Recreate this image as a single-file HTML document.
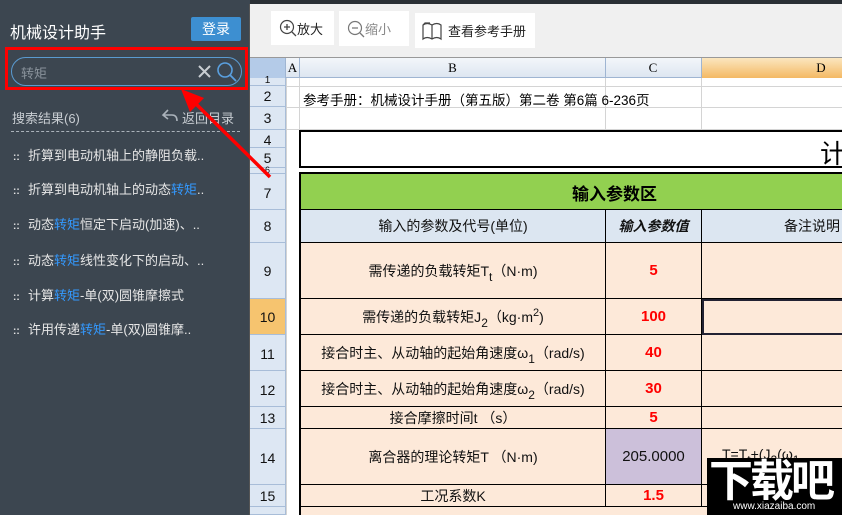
<!DOCTYPE html>
<html><head><meta charset="utf-8"><style>
*{margin:0;padding:0;box-sizing:border-box}
body{width:842px;height:515px;overflow:hidden;position:relative;background:#fff;font-family:"Liberation Sans","Noto Sans CJK SC",sans-serif}
.a{position:absolute}
.sb{left:0;top:0;width:250px;height:515px;background:#3c4650}
.it{left:13px;font-size:13px;color:#e6e6e6;white-space:nowrap}
.it b{font-weight:normal;color:#3399ff}
.dot{display:inline-block;width:7px;margin-right:8px;font-size:10px;font-weight:bold}
.tb{background:#fff;font-size:13px;color:#222;display:flex;align-items:center}
.rh{left:250px;width:36px;background:#dde7f3;border-bottom:1px solid #a8bdd8;border-right:1px solid #a8bdd8;text-align:center;font-size:14px;font-family:"Liberation Sans",sans-serif;color:#111}
.c{position:absolute;display:flex;align-items:center;justify-content:center;font-size:14px;color:#111;border-right:1px solid #000;border-bottom:1px solid #000;white-space:nowrap}
.r{color:#f00;font-weight:bold;font-size:15px}
sub{font-size:12px;vertical-align:-5px;line-height:0}
sup{font-size:11px;vertical-align:6px;line-height:0}
</style></head><body>
<div class="a" style="left:0;top:0;width:842px;height:4px;background:#2a2f35"></div>
<div class="a sb"></div>
<div class="a" style="left:10px;top:19px;font-size:16px;color:#fff">机械设计助手</div>
<div class="a" style="left:191px;top:17px;width:50px;height:24px;background:#3d8fd1;border-radius:2px;color:#fff;font-size:14px;text-align:center;line-height:24px">登录</div>
<div class="a" style="left:5px;top:47px;width:243px;height:43px;border:3px solid #f00"></div>
<div class="a" style="left:11px;top:57px;width:231px;height:29px;border:1px solid #5a9ad0;border-radius:15px"></div>
<div class="a" style="left:21px;top:63px;font-size:13px;color:#8a939c">转矩</div>
<svg class="a" style="left:196px;top:60px" width="46" height="24"><path d="M3 6L14 17M14 6L3 17" stroke="#c8cdd2" stroke-width="2"/><circle cx="29" cy="10" r="7" fill="none" stroke="#5aa0e0" stroke-width="1.6"/><path d="M34 15L40 21" stroke="#5aa0e0" stroke-width="1.8"/></svg>
<div class="a" style="left:12px;top:108px;font-size:13px;color:#c8cdd2">搜索结果(6)</div>
<svg class="a" style="left:160px;top:107px" width="20" height="16"><path d="M8 3L3 8L8 12M3 8H12Q17 8 17 14" fill="none" stroke="#aab2ba" stroke-width="1.6"/></svg>
<div class="a" style="left:182px;top:108px;font-size:13px;color:#c8cdd2">返回目录</div>
<div class="a" style="left:11px;top:131px;width:229px;border-top:1px dashed #aab2ba"></div>
<div class="a it" style="top:145px"><span class="dot">::</span>折算到电动机轴上的静阻负载..</div>
<div class="a it" style="top:179px"><span class="dot">::</span>折算到电动机轴上的动态<b>转矩</b>..</div>
<div class="a it" style="top:214px"><span class="dot">::</span>动态<b>转矩</b>恒定下启动(加速)、..</div>
<div class="a it" style="top:250px"><span class="dot">::</span>动态<b>转矩</b>线性变化下的启动、..</div>
<div class="a it" style="top:285px"><span class="dot">::</span>计算<b>转矩</b>-单(双)圆锥摩擦式</div>
<div class="a it" style="top:319px"><span class="dot">::</span>许用传递<b>转矩</b>-单(双)圆锥摩..</div>
<div class="a" style="left:249px;top:4px;width:593px;height:54px;background:#f0f0f0;border-bottom:1px solid #999"></div>
<div class="a" style="left:249px;top:4px;width:1px;height:511px;background:#555"></div>
<div class="a tb" style="left:271px;top:11px;width:63px;height:34px;padding-left:8px"><svg width="18" height="18"><circle cx="8" cy="8" r="6.5" fill="none" stroke="#444" stroke-width="1.2"/><path d="M5 8H11M8 5V11M13 13L17 17" stroke="#444" stroke-width="1.3"/></svg>放大</div>
<div class="a tb" style="left:339px;top:11px;width:70px;height:35px;padding-left:8px;color:#888"><svg width="18" height="18"><circle cx="8" cy="8" r="6.5" fill="none" stroke="#777" stroke-width="1.2"/><path d="M5 8H11M13 13L17 17" stroke="#777" stroke-width="1.3"/></svg>缩小</div>
<div class="a tb" style="left:415px;top:13px;width:120px;height:35px;padding-left:6px"><svg width="22" height="20" style="margin-right:5px"><path d="M2 4Q6 1 11 4Q16 1 20 4V18Q16 15 11 18Q6 15 2 18Z M11 4V18 M2 4L4 2H9" fill="none" stroke="#444" stroke-width="1.2"/></svg>查看参考手册</div>
<div class="a" style="left:250px;top:58px;width:592px;height:20px;background:linear-gradient(#f3f6fa,#dde6f1);border-bottom:1px solid #9fb5d2"></div>
<div class="a" style="left:250px;top:58px;width:36px;height:20px;background:#b4cbe8;border-right:1px solid #9fb5d2"></div>
<div class="a" style="left:286px;top:60px;width:13px;text-align:center;font-size:13px;font-family:'Liberation Serif',serif">A</div>
<div class="a" style="left:299px;top:58px;width:1px;height:20px;background:#9fb5d2"></div>
<div class="a" style="left:300px;top:60px;width:305px;text-align:center;font-size:13px;font-family:'Liberation Serif',serif">B</div>
<div class="a" style="left:605px;top:58px;width:1px;height:20px;background:#9fb5d2"></div>
<div class="a" style="left:605px;top:60px;width:96px;text-align:center;font-size:13px;font-family:'Liberation Serif',serif">C</div>
<div class="a" style="left:701px;top:58px;width:141px;height:20px;background:linear-gradient(#fbe6bf,#f4b964);border-left:1px solid #9fb5d2"></div>
<div class="a" style="left:701px;top:60px;width:240px;text-align:center;font-size:13px;font-family:'Liberation Serif',serif">D</div>
<div class="a" style="left:286px;top:78px;width:556px;height:437px;background:#fff"></div>
<div class="a" style="left:299px;top:78px;width:1px;height:52px;background:#d4d4d4"></div>
<div class="a" style="left:605px;top:78px;width:1px;height:52px;background:#d4d4d4"></div>
<div class="a" style="left:701px;top:78px;width:1px;height:52px;background:#d4d4d4"></div>
<div class="a" style="left:286px;top:86px;width:556px;height:1px;background:#d4d4d4"></div>
<div class="a" style="left:286px;top:107px;width:556px;height:1px;background:#d4d4d4"></div>
<div class="a" style="left:286px;top:129px;width:556px;height:1px;background:#d4d4d4"></div>
<div class="a" style="left:286px;top:78px;width:1px;height:437px;background:#d4d4d4"></div>
<div class="a" style="left:303px;top:89px;font-size:13.5px;white-space:nowrap">参考手册：机械设计手册（第五版）第二卷 第6篇 6-236页</div>
<div class="a rh" style="top:78px;height:8px;font-size:10px;line-height:6px">1</div>
<div class="a rh" style="top:86px;height:21px;line-height:21px">2</div>
<div class="a rh" style="top:107px;height:23px;line-height:23px">3</div>
<div class="a rh" style="top:130px;height:18px;line-height:20px">4</div>
<div class="a rh" style="top:148px;height:20px;line-height:20px">5</div>
<div class="a rh" style="top:168px;height:6px;font-size:9px;line-height:5px">6</div>
<div class="a rh" style="top:174px;height:36px;line-height:38px">7</div>
<div class="a rh" style="top:210px;height:33px;line-height:33px">8</div>
<div class="a rh" style="top:243px;height:56px;line-height:56px">9</div>
<div class="a rh" style="top:299px;height:36px;line-height:36px;background:#f6c46f">10</div>
<div class="a rh" style="top:335px;height:36px;line-height:38px">11</div>
<div class="a rh" style="top:371px;height:36px;line-height:38px">12</div>
<div class="a rh" style="top:407px;height:22px;line-height:22px">13</div>
<div class="a rh" style="top:429px;height:56px;line-height:58px">14</div>
<div class="a rh" style="top:485px;height:22px;line-height:22px">15</div>
<div class="a rh" style="top:507px;height:8px"></div>
<div class="a" style="left:299px;top:130px;width:560px;height:38px;border:2px solid #000;border-right:none;background:#fff"></div>
<div class="a" style="left:820px;top:134px;font-size:26px">计</div>
<div class="a" style="left:299px;top:172px;width:560px;height:38px;border-top:2px solid #000;border-left:2px solid #000;background:#92d050;border-bottom:1px solid #000"></div>
<div class="a" style="left:300px;top:180px;width:305px;text-align:left;padding-left:272px;font-size:17px;font-weight:bold;white-space:nowrap">输入参数区</div>
<div class="a" style="left:299px;top:210px;width:2px;height:305px;background:#000"></div>
<div class="c" style="left:301px;top:210px;width:305px;height:33px;background:#dce6f1">输入的参数及代号(单位)</div>
<div class="c" style="left:606px;top:210px;width:96px;height:33px;background:#dce6f1;font-style:italic;font-weight:bold">输入参数值</div>
<div class="c" style="left:702px;top:210px;width:160px;height:33px;background:#dce6f1;justify-content:flex-start;padding-left:82px;border-right:none">备注说明</div>
<div class="c" style="left:301px;top:243px;width:305px;height:56px;background:#fde9d9"><span>需传递的负载转矩T<sub>t</sub>（N·m)</span></div>
<div class="c r" style="left:606px;top:243px;width:96px;height:56px;background:#fde9d9">5</div>
<div class="c" style="left:702px;top:243px;width:140px;height:56px;background:#fde9d9;border-right:none"></div>
<div class="c" style="left:301px;top:299px;width:305px;height:36px;background:#fde9d9"><span>需传递的负载转矩J<sub>2</sub>（kg·m<sup>2</sup>)</span></div>
<div class="c r" style="left:606px;top:299px;width:96px;height:36px;background:#fde9d9">100</div>
<div class="c" style="left:702px;top:299px;width:140px;height:36px;background:#fde9d9;border:2px solid #223;border-right:none"></div>
<div class="c" style="left:301px;top:335px;width:305px;height:36px;background:#fde9d9"><span>接合时主、从动轴的起始角速度ω<sub>1</sub>（rad/s)</span></div>
<div class="c r" style="left:606px;top:335px;width:96px;height:36px;background:#fde9d9">40</div>
<div class="c" style="left:702px;top:335px;width:140px;height:36px;background:#fde9d9;border-right:none"></div>
<div class="c" style="left:301px;top:371px;width:305px;height:36px;background:#fde9d9"><span>接合时主、从动轴的起始角速度ω<sub>2</sub>（rad/s)</span></div>
<div class="c r" style="left:606px;top:371px;width:96px;height:36px;background:#fde9d9">30</div>
<div class="c" style="left:702px;top:371px;width:140px;height:36px;background:#fde9d9;border-right:none"></div>
<div class="c" style="left:301px;top:407px;width:305px;height:22px;background:#fde9d9">接合摩擦时间t （s）</div>
<div class="c r" style="left:606px;top:407px;width:96px;height:22px;background:#fde9d9">5</div>
<div class="c" style="left:702px;top:407px;width:140px;height:22px;background:#fde9d9;border-right:none"></div>
<div class="c" style="left:301px;top:429px;width:305px;height:56px;background:#fde9d9">离合器的理论转矩T （N·m)</div>
<div class="c" style="left:606px;top:429px;width:96px;height:56px;background:#ccc0da;font-size:15px">205.0000</div>
<div class="c" style="left:702px;top:429px;width:140px;height:56px;background:#fde9d9;border-right:none;justify-content:flex-start;padding-left:20px;padding-bottom:6px"><span>T=T<sub>t</sub>+(J<sub>2</sub>(ω<sub>1</sub></span></div>
<div class="c" style="left:301px;top:485px;width:305px;height:22px;background:#fde9d9">工况系数K</div>
<div class="c r" style="left:606px;top:485px;width:96px;height:22px;background:#fde9d9">1.5</div>
<div class="c" style="left:702px;top:485px;width:140px;height:22px;background:#fde9d9;border-right:none"></div>
<div class="a" style="left:301px;top:507px;width:541px;height:8px;background:#fde9d9"></div>
<div class="a" style="left:707px;top:458px;width:135px;height:57px;background:#000"></div>
<div class="a" style="left:709px;top:452px;font-size:44px;font-weight:bold;color:#fff;font-family:'Noto Sans CJK SC',sans-serif;letter-spacing:-3px;line-height:50px">下载吧</div>
<div class="a" style="left:733px;top:501px;font-size:10px;color:#fff">www.xiazaiba.com</div>
<svg class="a" style="left:0;top:0" width="842" height="515"><path d="M270 177L192 100" stroke="#f00" stroke-width="3.5"/><path d="M181 89L204 98L190 112Z" fill="#f00"/></svg>
</body></html>
